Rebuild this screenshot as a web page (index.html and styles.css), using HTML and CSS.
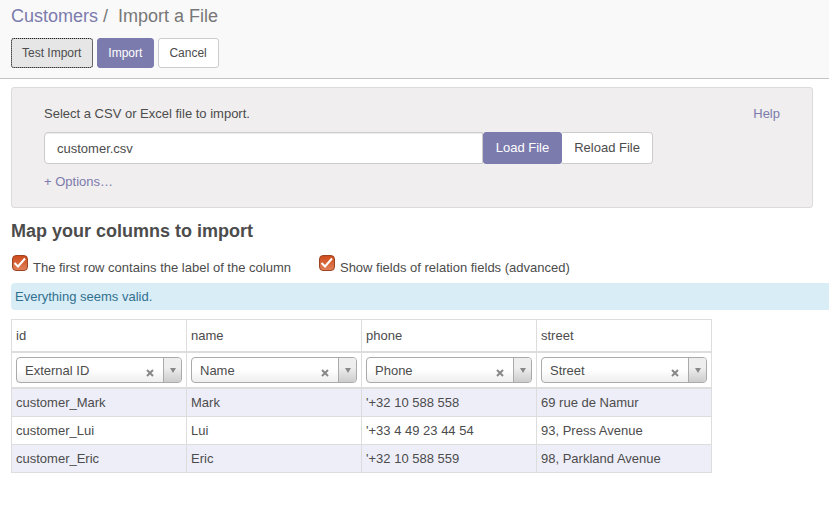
FILE: index.html
```
<!DOCTYPE html>
<html lang="en">
<head>
<meta charset="utf-8">
<meta name="viewport" content="width=device-width, initial-scale=1">
<title>Import a File</title>
<link rel="stylesheet" href="styles.css">
</head>
<body>
<header class="control-panel">
  <nav class="breadcrumb"><a href="#">Customers</a><span class="separator">/</span><span>Import a File</span></nav>
  <div class="actions">
    <button type="button" class="btn btn-active">Test Import</button>
    <button type="button" class="btn btn-primary">Import</button>
    <button type="button" class="btn">Cancel</button>
  </div>
</header>
<main class="content">
  <section class="file-panel">
    <div class="file-heading">
      <label for="file">Select a CSV or Excel file to import.</label>
      <a href="#">Help</a>
    </div>
    <div class="file-row">
      <input class="file-name" id="file" type="text" value="customer.csv">
      <button type="button" class="file-btn file-load">Load File</button>
      <button type="button" class="file-btn file-reload">Reload File</button>
    </div>
    <a class="options" href="#">+ Options…</a>
  </section>
  <h2 class="title">Map your columns to import</h2>
  <div class="checks">
    <label class="check"><input type="checkbox" checked><svg class="tick" viewBox="0 0 16 16" aria-hidden="true"><path d="M2.5 8 6 11.5 13 3.5"/></svg><span>The first row contains the label of the column</span></label>
    <label class="check"><input type="checkbox" checked><svg class="tick" viewBox="0 0 16 16" aria-hidden="true"><path d="M2.5 8 6 11.5 13 3.5"/></svg><span>Show fields of relation fields (advanced)</span></label>
  </div>
  <div class="alert" role="status">Everything seems valid.</div>
  <table class="grid">
    <thead>
      <tr class="names"><th>id</th><th>name</th><th>phone</th><th>street</th></tr>
      <tr class="fields">
        <td><div class="picker"><select aria-label="Field for id"><option>External ID</option></select><button type="button" class="clear" aria-label="Clear id"><svg viewBox="0 0 8 8"><path d="M1 1 7 7M7 1 1 7"/></svg></button><span class="arrow"></span></div></td>
        <td><div class="picker"><select aria-label="Field for name"><option>Name</option></select><button type="button" class="clear" aria-label="Clear name"><svg viewBox="0 0 8 8"><path d="M1 1 7 7M7 1 1 7"/></svg></button><span class="arrow"></span></div></td>
        <td><div class="picker"><select aria-label="Field for phone"><option>Phone</option></select><button type="button" class="clear" aria-label="Clear phone"><svg viewBox="0 0 8 8"><path d="M1 1 7 7M7 1 1 7"/></svg></button><span class="arrow"></span></div></td>
        <td><div class="picker"><select aria-label="Field for street"><option>Street</option></select><button type="button" class="clear" aria-label="Clear street"><svg viewBox="0 0 8 8"><path d="M1 1 7 7M7 1 1 7"/></svg></button><span class="arrow"></span></div></td>
      </tr>
    </thead>
    <tbody>
      <tr><td>customer_Mark</td><td>Mark</td><td>'+32 10 588 558</td><td>69 rue de Namur</td></tr>
      <tr><td>customer_Lui</td><td>Lui</td><td>'+33 4 49 23 44 54</td><td>93, Press Avenue</td></tr>
      <tr><td>customer_Eric</td><td>Eric</td><td>'+32 10 588 559</td><td>98, Parkland Avenue</td></tr>
    </tbody>
  </table>
</main>
</body>
</html>
```
FILE: styles.css
```
* { box-sizing: border-box; }
body {
  margin: 0;
  background: #fff;
  color: #4c4c4c;
  font: 13px/20px "Liberation Sans", Arial, sans-serif;
}
a { color: #7c7bad; text-decoration: none; }
button, input, select { font: inherit; color: inherit; margin: 0; }

.control-panel {
  padding: 4px 11px 10px;
  background: #f9f9f9;
  border-bottom: 1px solid #c4c4c4;
}
.breadcrumb { color: #777; font-size: 18px; line-height: 24px; }
.separator { padding: 0 10px 0 5px; }
.actions { display: flex; gap: 4px; margin-top: 10px; }
.btn {
  height: 30px;
  padding: 0 11px 0 10px;
  border: 1px solid #ccc;
  border-radius: 3px;
  background: #fff;
  font-size: 12px;
}
.btn-active { background: #e6e6e6; border: 1px solid #adadad; outline: 1px dotted #222; outline-offset: -1px; }
.btn-primary { background: #7c7bad; border-color: #7c7bad; color: #fff; }

.content { padding: 8px 0 0 11px; }
.file-panel {
  margin-right: 16px;
  padding: 16px 32px 15px;
  border: 1px solid #dbdbdb;
  border-radius: 3px;
  background: #f0eeee;
}
.file-heading { display: flex; justify-content: space-between; }
.file-row { display: flex; margin: 8px 127px 8px 0; }
.file-name {
  flex: 1;
  min-width: 0;
  height: 32px;
  padding: 0 12px;
  border: 1px solid #ccc;
  border-radius: 4px 0 0 4px;
  background: #fff;
  box-shadow: inset 0 1px 1px rgba(0, 0, 0, .08);
}
.file-btn { height: 32px; padding: 0 12px; border: 1px solid #ccc; background: #fff; }
.file-load { background: #7c7bad; border-color: #7c7bad; border-radius: 3px; color: #fff; }
.file-reload { border-left: 0; border-radius: 0 4px 4px 0; }
.options { display: block; width: max-content; }

.title { margin: 11px 0 12px; font-size: 18px; line-height: 24px; }
.checks { display: flex; gap: 27px; }
.check { display: grid; grid-template-columns: 18px auto; column-gap: 4px; }
.check input, .tick { grid-area: 1 / 1; width: 16px; height: 16px; margin-left: 1px; }
.check input {
  appearance: none;
  border: 1px solid #9d4422;
  border-radius: 4px;
  background: linear-gradient(#cf4b1c, #e08058);
}
.tick { position: relative; fill: none; stroke: #fff; stroke-width: 2; pointer-events: none; }
.check span { padding-top: 3px; }
.alert {
  margin: 5px 0 9px;
  padding: 4px;
  border-radius: 4px 0 0 4px;
  background: #d9edf7;
  color: #31708f;
  line-height: 19px;
}

.grid { border-collapse: collapse; }
.grid th, .grid td {
  padding: 4px;
  border: 1px solid #ddd;
  text-align: left;
  font-weight: normal;
  line-height: 19px;
}
.grid .names th { padding: 6px 4px; border-bottom-width: 2px; }
.grid .fields td { border-bottom-width: 2px; }
.grid tbody tr:nth-child(odd) { background: #eeeef8; }
.picker {
  position: relative;
  width: 166px;
  height: 26px;
  overflow: hidden;
  border: 1px solid #aaa;
  border-radius: 4px;
  background: linear-gradient(#fff 50%, #eee);
}
.picker select {
  appearance: none;
  display: block;
  width: 100%;
  height: 100%;
  padding: 0 40px 0 8px;
  border: 0;
  background: transparent;
}
.clear {
  position: absolute;
  top: 11px;
  right: 27px;
  width: 8px;
  height: 8px;
  padding: 0;
  border: 0;
  background: none;
}
.clear svg { display: block; width: 8px; height: 8px; stroke: #888; stroke-width: 2; }
.arrow {
  position: absolute;
  top: 0;
  right: 0;
  bottom: 0;
  display: flex;
  align-items: center;
  justify-content: center;
  width: 18px;
  border-left: 1px solid #aaa;
  background: linear-gradient(#eee 40%, #ccc);
  pointer-events: none;
}
.arrow::after {
  content: "";
  border: 3px solid transparent;
  border-top: 5px solid #888;
  border-bottom: 0;
}
```
